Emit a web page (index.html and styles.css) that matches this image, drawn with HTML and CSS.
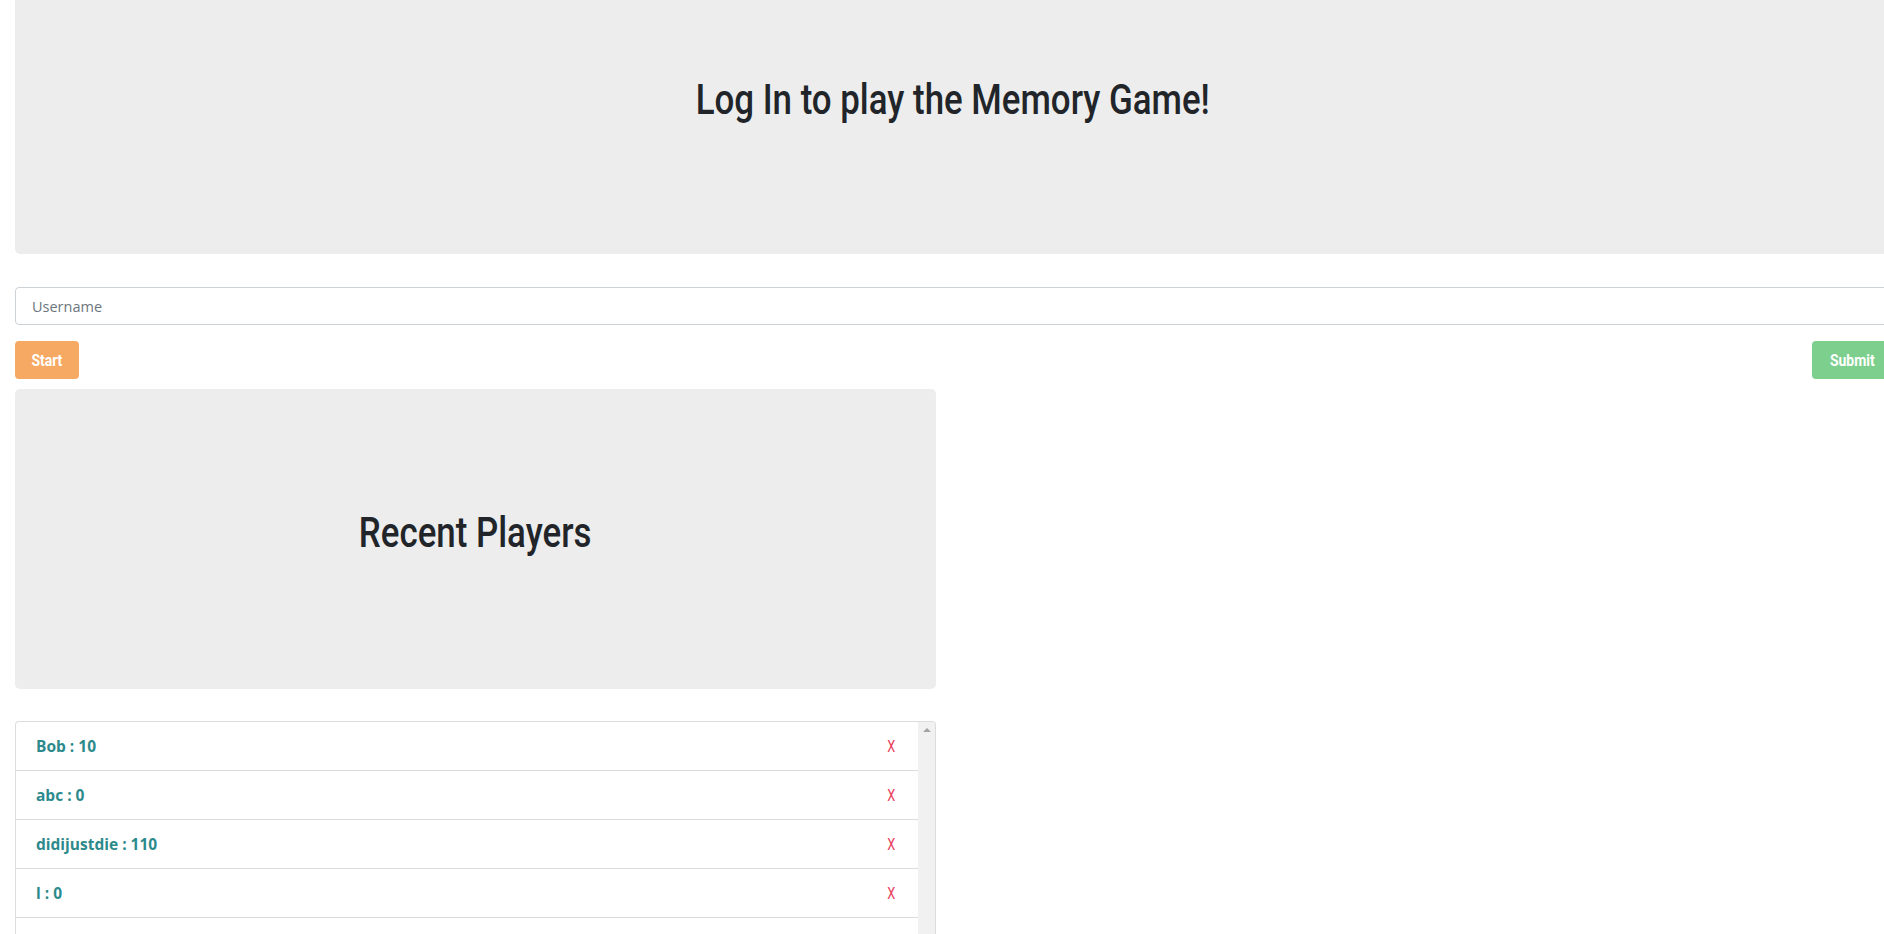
FILE: index.html
```html
<!DOCTYPE html>
<html lang="en">
<head>
<meta charset="utf-8">
<title>Memory Game</title>
<link rel="stylesheet" href="styles.css">
</head>
<body>
<div class="page">
  <div class="jumbotron">
    <h1 class="jumbo-title"><span class="narrow">Log In to play the Memory Game!</span></h1>
  </div>
  <input class="username" type="text" placeholder="Username">
  <div class="actions">
    <button class="btn btn-start"><span class="narrow">Start</span></button>
    <button class="btn btn-submit"><span class="narrow">Submit</span></button>
  </div>
  <div class="side">
    <div class="panel">
      <h2 class="panel-title"><span class="narrow">Recent Players</span></h2>
    </div>
    <div class="players">
      <ul class="player-list">
        <li class="player"><span class="player-name">Bob : 10</span><span class="remove">X</span></li>
        <li class="player"><span class="player-name">abc : 0</span><span class="remove">X</span></li>
        <li class="player"><span class="player-name">didijustdie : 110</span><span class="remove">X</span></li>
        <li class="player"><span class="player-name">l : 0</span><span class="remove">X</span></li>
        <li class="player player-empty"></li>
      </ul>
      <div class="scrollbar"><span class="scroll-arrow"></span></div>
    </div>
  </div>
</div>
</body>
</html>
```

FILE: styles.css
```css
html, body {
  margin: 0;
  padding: 0;
  overflow: hidden;
  height: 934px;
  background: #fff;
}

.page {
  padding-left: 15px;
  width: 1875px;
  font-family: "Open Sans", "Liberation Sans", sans-serif;
  color: #212529;
}

.narrow {
  display: inline-block;
  transform: scaleX(0.83);
  transform-origin: center center;
  white-space: nowrap;
}

.jumbotron {
  background: #ededed;
  height: 254px;
  border-radius: 0 0 5px 5px;
  box-sizing: border-box;
  padding-top: 76px;
}

.jumbo-title {
  margin: 0;
  text-align: center;
  font-family: Roboto, "Liberation Sans", sans-serif;
  font-weight: 500;
  font-size: 42px;
  line-height: 48px;
  color: #212529;
}

.username {
  display: block;
  box-sizing: border-box;
  width: 1875px;
  height: 38px;
  margin-top: 33px;
  padding: 0 16px;
  border: 1px solid #ccd1d6;
  border-radius: 4px;
  font-family: "Open Sans", sans-serif;
  font-size: 14.5px;
  color: #495057;
  outline: none;
}

.username::placeholder {
  color: #6c757d;
}

.actions {
  display: flex;
  justify-content: space-between;
  margin-top: 16px;
  width: 1875px;
}

.btn {
  height: 38px;
  border: none;
  border-radius: 4px;
  padding: 0;
  color: #fff;
  font-family: Roboto, "Liberation Sans", sans-serif;
  font-weight: 700;
  font-size: 17px;
  text-align: center;
}

.btn .narrow {
  transform: scaleX(0.82);
}

.btn-start {
  background: #f6a963;
  width: 64px;
}

.btn-submit {
  background: #7dcf8d;
  width: 80px;
  margin-left: auto;
  margin-right: -2px;
}

.side {
  width: 921px;
  margin-top: 10px;
}

.panel {
  background: #ededed;
  height: 300px;
  border-radius: 5px;
  display: flex;
  align-items: center;
  justify-content: center;
}

.panel-title {
  margin: 0 0 12px;
  font-family: Roboto, "Liberation Sans", sans-serif;
  font-weight: 500;
  font-size: 42px;
  line-height: 50px;
  color: #212529;
}

.players {
  display: flex;
  margin-top: 32px;
  border: 1px solid #dcdcdc;
  border-bottom: none;
  border-radius: 4px 4px 0 0;
  height: 300px;
  overflow: hidden;
}

.player-list {
  list-style: none;
  margin: 0;
  padding: 0;
  flex: 1;
}

.player {
  display: flex;
  align-items: center;
  justify-content: space-between;
  height: 48px;
  border-bottom: 1px solid #dcdcdc;
  padding: 0 21px 0 20px;
}

.player-name {
  font-family: "Open Sans", sans-serif;
  font-weight: 700;
  font-size: 15.5px;
  color: #2d8a8c;
}

.remove {
  font-family: Roboto, sans-serif;
  font-weight: 400;
  font-size: 17px;
  color: #e8405a;
  display: inline-block;
  transform: scaleX(0.75);
}

.scrollbar {
  width: 17px;
  background: #f1f1f1;
  display: flex;
  justify-content: center;
  padding-top: 6px;
  box-sizing: border-box;
}

.scroll-arrow {
  width: 0;
  height: 0;
  border-left: 4px solid transparent;
  border-right: 4px solid transparent;
  border-bottom: 4px solid #a3a3a3;
}
```
